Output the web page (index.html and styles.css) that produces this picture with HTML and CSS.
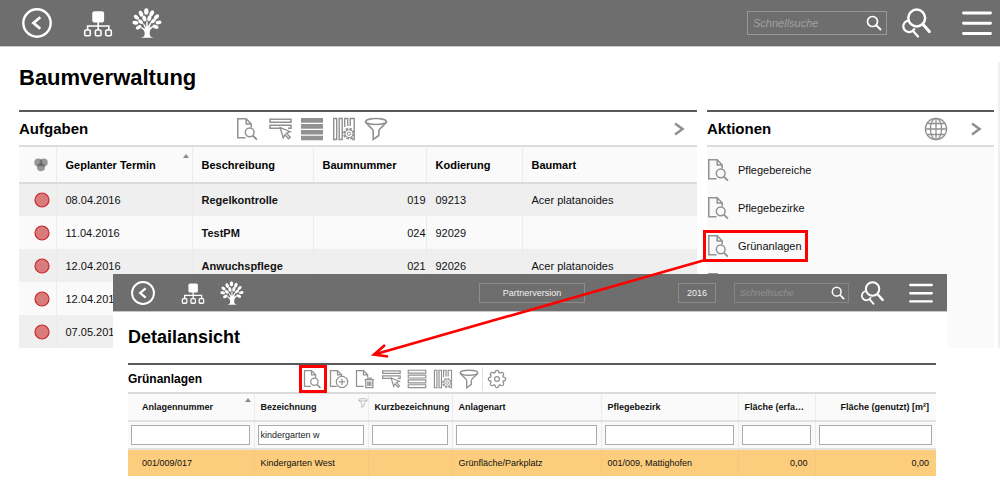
FILE: index.html
```html
<!DOCTYPE html>
<html lang="de">
<head>
<meta charset="utf-8">
<title>Baumverwaltung</title>
<link rel="stylesheet" href="styles.css">
</head>
<body>
<svg class="sprite" aria-hidden="true">
  <symbol id="back" viewBox="0 0 30 30"><circle cx="15" cy="15" r="13.7" fill="none" stroke="currentColor" stroke-width="2.4"/><path d="M18.300 9.200 11.500 15l6.800 5.800" fill="none" stroke="currentColor" stroke-width="2.800"/></symbol>
  <symbol id="sitemap" viewBox="0 0 30 30"><rect x="9.3" y="3.2" width="11.8" height="11.2" rx="2" fill="currentColor"/><g fill="none" stroke="currentColor" stroke-width="1.6"><path d="M15.200 13v9M4.600 22v-4h21.200v4"/><rect x="1.700" y="22" width="5.600" height="5.800" rx="1.3"/><rect x="12.400" y="22" width="5.600" height="5.800" rx="1.3"/><rect x="22.700" y="22" width="5.600" height="5.800" rx="1.3"/></g></symbol>
  <symbol id="tree" viewBox="0 0 30 30"><g fill="currentColor"><path d="M8.500 29.800c3-.8 4.200-1.500 4.200-4 0-2.700-1-4-4-5.800l.6-1 4 1.900-2.400-5.200 1-.5 2.200 4 .2-6h1.300l.2 5.400 2.800-4.600 1 .6-2.200 5.200 4.200-2.300.6 1c-3.300 2.100-4.500 3.700-4.500 7.300 0 2.500 1.300 3.200 4.100 4z"/><ellipse cx="14.300" cy="3.500" rx="2.200" ry="3.300"/><ellipse cx="9" cy="5.700" rx="2" ry="3.100" transform="rotate(-22 9 5.700)"/><ellipse cx="19.800" cy="5.300" rx="2" ry="3.200" transform="rotate(24 19.800 5.300)"/><ellipse cx="12.300" cy="10.500" rx="1.900" ry="3" transform="rotate(-18 12.300 10.500)"/><ellipse cx="17.300" cy="10.200" rx="1.900" ry="3" transform="rotate(18 17.300 10.200)"/><ellipse cx="4.400" cy="9.300" rx="1.900" ry="3" transform="rotate(-52 4.400 9.300)"/><ellipse cx="24.500" cy="8.800" rx="1.900" ry="3" transform="rotate(45 24.500 8.800)"/><ellipse cx="3.400" cy="14.800" rx="1.900" ry="3" transform="rotate(-80 3.400 14.800)"/><ellipse cx="8.600" cy="13.600" rx="1.700" ry="2.900" transform="rotate(-50 8.600 13.600)"/><ellipse cx="21.300" cy="12.900" rx="1.800" ry="2.900" transform="rotate(52 21.300 12.900)"/><ellipse cx="26.500" cy="14.500" rx="1.800" ry="3" transform="rotate(80 26.500 14.500)"/><ellipse cx="6.600" cy="19.300" rx="1.800" ry="3.100" transform="rotate(62 6.600 19.300)"/><ellipse cx="23.500" cy="18.800" rx="1.900" ry="3.100" transform="rotate(-68 23.500 18.800)"/></g></symbol>
  <symbol id="search" viewBox="0 0 16 16"><circle cx="6.500" cy="6.500" r="5" fill="none" stroke="currentColor" stroke-width="1.700"/><path d="M10.200 10.200 15 15" stroke="currentColor" stroke-width="2"/></symbol>
  <symbol id="search2" viewBox="0 0 30 30"><g fill="none" stroke="currentColor" stroke-linecap="round"><circle cx="15.700" cy="10" r="8.400" stroke-width="2.500"/><path d="m22.300 16.800 6 6.800" stroke-width="3"/><path d="M6.200 12.800a5.800 5.800 0 1 0 7 8.300M12.300 23.200l4.700 5.300" stroke-width="2.200"/></g></symbol>
  <symbol id="menu" viewBox="0 0 30 30"><path d="M1.500 5h27M1.500 15.300h27M1.500 25.500h27" stroke="currentColor" stroke-width="2.900" stroke-linecap="round"/></symbol>
  <symbol id="doc" viewBox="0 0 24 24"><g fill="none" stroke="currentColor" stroke-width="1.500"><path d="M9.500 20.800H1.800V1.800h8.400l5 5.200v3.500M10.200 1.800V7h5"/><circle cx="13.700" cy="15.300" r="4.400"/><path d="m16.900 18.600 4 4.100" stroke-width="1.900"/></g></symbol>
  <symbol id="docadd" viewBox="0 0 24 24"><g fill="none" stroke="currentColor" stroke-width="1.500"><path d="M9.500 20.800H1.800V1.800h8.400l5 5.200v1.500M10.200 1.800V7h5"/><circle cx="15.600" cy="15.500" r="6.800"/><path d="M15.600 11.700v7.600M11.800 15.500h7.600"/></g></symbol>
  <symbol id="doctrash" viewBox="0 0 24 24"><g fill="none" stroke="currentColor" stroke-width="1.500"><path d="M10.500 20.800H1.800V1.800h8.400l5 5.200v2.500M10.200 1.800V7h5"/><path d="M11.500 12.800h11.300M15 12.500v-1.700h4.300v1.700M12.900 13v9.300h8.500V13M15.400 15v5.500M17.200 15v5.500M19 15v5.500"/></g></symbol>
  <symbol id="select" viewBox="0 0 24 24"><path d="M2 2.200h21v3.100H2zM13 11.300H2V8.200h21v3.100h-3" fill="none" stroke="currentColor" stroke-width="1.500"/><path d="m12.200 10.700 10 4-3.700 1.500 3.700 4-1.700 1.500-3.600-4-1.700 3.200z" fill="#fff" stroke="currentColor" stroke-width="1.400"/></symbol>
  <symbol id="rows" viewBox="0 0 24 24"><path d="M1 1h22v4.700H1zM1 7h22v4.700H1zM1 13h22v4.500H1zM1 18.800h22v4.400H1z" fill="currentColor"/></symbol>
  <symbol id="rowsline" viewBox="0 0 24 24"><path d="M1.500 1.500h21v3.500h-21zM1.500 7.300h21v3.500h-21zM1.500 13.100h21v3.500h-21zM1.500 18.900h21v3.500h-21z" fill="none" stroke="currentColor" stroke-width="1.400"/></symbol>
  <symbol id="cols" viewBox="0 0 24 24"><g fill="none" stroke="currentColor" stroke-width="1.400"><path d="M1.700 1.500h3v21h-3zM7.200 1.500h3v21h-3zM12.700 10V1.500h3V9M18.200 9V1.500h4V22.500H20"/></g><circle cx="17" cy="16.700" r="5" fill="#fff" stroke="currentColor" stroke-width="1.900" stroke-dasharray="2.500 1.400"/><circle cx="17" cy="16.700" r="4" fill="#fff" stroke="currentColor"/><circle cx="17" cy="16.700" r="1.700" fill="none" stroke="currentColor"/></symbol>
  <symbol id="funnel" viewBox="0 0 24 24"><g fill="none" stroke="currentColor" stroke-width="1.600"><ellipse cx="12" cy="4.500" rx="10.500" ry="3"/><path d="M1.500 4.500c0 2.300 7.700 7 7.700 9.500v8.500l5.600-4V14c0-2.500 7.700-7.200 7.700-9.500"/></g></symbol>
  <symbol id="gear" viewBox="0 0 24 24"><g fill="none" stroke="currentColor" stroke-width="1.500"><path d="M9.700 4.400c0-3.700 4.600-3.700 4.600 0l1.500.6c2.600-2.600 5.900.7 3.200 3.300l.6 1.400c3.700 0 3.700 4.600 0 4.600l-.6 1.500c2.700 2.600-.6 5.900-3.200 3.200l-1.500.6c0 3.700-4.600 3.700-4.600 0L8.300 19c-2.600 2.700-5.900-.6-3.300-3.200l-.6-1.500c-3.700 0-3.700-4.600 0-4.600L5 8.300C2.400 5.700 5.700 2.400 8.300 5z"/><circle cx="12" cy="12" r="2.900"/></g></symbol>
  <symbol id="globe" viewBox="0 0 24 24"><g fill="none" stroke="currentColor" stroke-width="1.300"><circle cx="12" cy="12" r="10.600"/><ellipse cx="12" cy="12" rx="5.600" ry="10.600"/><path d="M12 1.400v21.200M1.400 12h21.200M3 6.500h18M3 17.500h18"/></g></symbol>
  <symbol id="next" viewBox="0 0 12 16"><path d="m2 2.500 7.500 5.500L2 13.500" fill="none" stroke="currentColor" stroke-width="2.600"/></symbol>
  <symbol id="status" viewBox="0 0 14 14"><g fill="#555" fill-opacity=".6"><circle cx="4.300" cy="4.500" r="4"/><circle cx="9.700" cy="4.500" r="4"/><circle cx="7" cy="9.300" r="4"/></g></symbol>
  <symbol id="dot" viewBox="0 0 16 16"><circle cx="8" cy="8" r="7" fill="#da7b7b" stroke="#c4282b" stroke-width="1.200"/></symbol>
</svg>

<header class="bar">
  <button class="icon-btn" aria-label="Zurück"><svg class="i30"><use href="#back"/></svg></button>
  <button class="icon-btn home" aria-label="Übersicht"><svg class="i30"><use href="#sitemap"/></svg></button>
  <button class="icon-btn tree" aria-label="Bäume"><svg class="i30"><use href="#tree"/></svg></button>
  <div class="bar-end">
    <label class="search"><input type="text" placeholder="Schnellsuche" aria-label="Schnellsuche"><svg class="i16"><use href="#search"/></svg></label>
    <button class="icon-btn finder" aria-label="Erweiterte Suche"><svg class="i30"><use href="#search2"/></svg></button>
    <button class="icon-btn menu" aria-label="Menü"><svg class="i30"><use href="#menu"/></svg></button>
  </div>
</header>

<main class="page">
  <h1>Baumverwaltung</h1>
  <div class="panels">
    <section class="panel">
      <div class="panel-head">
        <h2>Aufgaben</h2>
        <div class="tools">
          <button class="icon-btn" aria-label="Anzeigen"><svg><use href="#doc"/></svg></button>
          <button class="icon-btn" aria-label="Auswählen"><svg><use href="#select"/></svg></button>
          <button class="icon-btn" aria-label="Zeilen"><svg><use href="#rows"/></svg></button>
          <button class="icon-btn" aria-label="Spalten"><svg><use href="#cols"/></svg></button>
          <button class="icon-btn" aria-label="Filter"><svg><use href="#funnel"/></svg></button>
        </div>
        <button class="icon-btn next" aria-label="Weiter"><svg><use href="#next"/></svg></button>
      </div>
      <table class="tasks">
        <colgroup><col class="c-status"><col class="c-date"><col class="c-desc"><col class="c-num"><col class="c-code"><col></colgroup>
        <thead><tr><th><svg class="i14"><use href="#status"/></svg></th><th class="sorted">Geplanter Termin</th><th>Beschreibung</th><th>Baumnummer</th><th>Kodierung</th><th>Baumart</th></tr></thead>
        <tbody>
          <tr><td><svg class="i16"><use href="#dot"/></svg></td><td>08.04.2016</td><td class="strong">Regelkontrolle</td><td class="num">019</td><td>09213</td><td>Acer platanoides</td></tr>
          <tr><td><svg class="i16"><use href="#dot"/></svg></td><td>11.04.2016</td><td class="strong">TestPM</td><td class="num">024</td><td>92029</td><td></td></tr>
          <tr><td><svg class="i16"><use href="#dot"/></svg></td><td>12.04.2016</td><td class="strong">Anwuchspflege</td><td class="num">021</td><td>92026</td><td>Acer platanoides</td></tr>
          <tr><td><svg class="i16"><use href="#dot"/></svg></td><td>12.04.2016</td><td></td><td></td><td></td><td></td></tr>
          <tr><td><svg class="i16"><use href="#dot"/></svg></td><td>07.05.2016</td><td></td><td></td><td></td><td></td></tr>
        </tbody>
      </table>
    </section>
    <section class="panel actions">
      <div class="panel-head">
        <h2>Aktionen</h2>
        <button class="icon-btn globe" aria-label="Karte"><svg><use href="#globe"/></svg></button>
        <button class="icon-btn next" aria-label="Weiter"><svg><use href="#next"/></svg></button>
      </div>
      <ul>
        <li><a href="#"><svg><use href="#doc"/></svg>Pflegebereiche</a></li>
        <li><a href="#"><svg><use href="#doc"/></svg>Pflegebezirke</a></li>
        <li><a href="#" class="marked"><svg><use href="#doc"/></svg>Grünanlagen</a></li>
        <li><svg><use href="#doc"/></svg></li>
      </ul>
    </section>
  </div>
</main>

<section class="detail">
  <header class="bar small">
    <button class="icon-btn" aria-label="Zurück"><svg class="i24"><use href="#back"/></svg></button>
    <button class="icon-btn home" aria-label="Übersicht"><svg class="i24"><use href="#sitemap"/></svg></button>
    <button class="icon-btn tree" aria-label="Bäume"><svg class="i24"><use href="#tree"/></svg></button>
    <div class="bar-end">
      <button class="box version">Partnerversion</button>
      <button class="box year">2016</button>
      <label class="search"><input type="text" placeholder="Schnellsuche" aria-label="Schnellsuche"><svg class="i14"><use href="#search"/></svg></label>
      <button class="icon-btn finder" aria-label="Erweiterte Suche"><svg class="i24"><use href="#search2"/></svg></button>
      <button class="icon-btn menu" aria-label="Menü"><svg class="i24"><use href="#menu"/></svg></button>
    </div>
  </header>
  <div class="detail-body">
    <h1>Detailansicht</h1>
    <div class="panel-head">
      <h2>Grünanlagen</h2>
      <div class="tools">
        <button class="icon-btn marked" aria-label="Anzeigen"><svg><use href="#doc"/></svg></button>
        <button class="icon-btn" aria-label="Neu"><svg><use href="#docadd"/></svg></button>
        <button class="icon-btn" aria-label="Löschen"><svg><use href="#doctrash"/></svg></button>
        <button class="icon-btn" aria-label="Auswählen"><svg><use href="#select"/></svg></button>
        <button class="icon-btn" aria-label="Zeilen"><svg><use href="#rowsline"/></svg></button>
        <button class="icon-btn" aria-label="Spalten"><svg><use href="#cols"/></svg></button>
        <button class="icon-btn" aria-label="Filter"><svg><use href="#funnel"/></svg></button>
        <button class="icon-btn settings" aria-label="Einstellungen"><svg><use href="#gear"/></svg></button>
      </div>
    </div>
    <table class="areas">
      <colgroup><col class="a-num"><col class="a-name"><col class="a-short"><col><col class="a-district"><col class="a-area"><col class="a-used"></colgroup>
      <thead>
        <tr><th class="sorted">Anlagennummer</th><th class="filtered">Bezeichnung<svg class="i10"><use href="#funnel"/></svg></th><th>Kurzbezeichnung</th><th>Anlagenart</th><th>Pflegebezirk</th><th>Fläche (erfa…</th><th class="num">Fläche (genutzt) [m²]</th></tr>
        <tr class="filters"><td><input type="text" aria-label="Anlagennummer"></td><td><input type="text" aria-label="Bezeichnung" value="kindergarten w"></td><td><input type="text" aria-label="Kurzbezeichnung"></td><td><input type="text" aria-label="Anlagenart"></td><td><input type="text" aria-label="Pflegebezirk"></td><td><input type="text" aria-label="Fläche (erfasst)"></td><td><input type="text" aria-label="Fläche (genutzt)"></td></tr>
      </thead>
      <tbody><tr><td>001/009/017</td><td>Kindergarten West</td><td></td><td>Grünfläche/Parkplatz</td><td>001/009, Mattighofen</td><td class="num">0,00</td><td class="num">0,00</td></tr></tbody>
    </table>
  </div>
</section>

<svg class="arrow" viewBox="0 0 340 105" aria-hidden="true"><path d="M335 2 6 96M15 87 4 96.500 18 98.500" fill="none" stroke="#f00" stroke-width="2.700"/></svg>
</body>
</html>
```
FILE: styles.css
```css
* { box-sizing: border-box; }

body {
  margin: 0;
  position: relative;
  min-height: 100vh;
  overflow: hidden;
  background: #fff;
  color: #111;
  font-family: "Liberation Sans", Arial, sans-serif;
  font-size: 11px;
}

h1, h2 { margin: 0; color: #000; }
ul { list-style: none; margin: 0; padding: 0; }
a { color: inherit; text-decoration: none; }
svg { display: block; }
.sprite { position: absolute; width: 0; height: 0; }

.i30 { width: 30px; height: 30px; }
.i24 { width: 24px; height: 24px; }
.i16 { width: 16px; height: 16px; }
.i14 { width: 14px; height: 14px; }
.i10 { width: 10px; height: 10px; }

.icon-btn {
  padding: 0;
  border: 0;
  background: none;
  color: inherit;
  flex: none;
}

/* Top bars */
.bar {
  display: flex;
  align-items: center;
  height: 47px;
  padding: 0 8px 0 22px;
  background: #6e6e6e;
  border-bottom: 1px solid #c8c8c8;
  color: #fff;
}
.bar .home { margin-left: 31px; }
.bar .tree { margin-left: 19px; }
.bar-end { display: flex; align-items: center; margin-left: auto; }
.bar .finder { margin-left: 14px; }
.bar .menu { margin-left: 31px; }

.search {
  display: flex;
  align-items: center;
  width: 140px;
  height: 24px;
  padding: 0 4px 0 5px;
  border: 1px solid #989898;
}
.search input {
  flex: 1;
  min-width: 0;
  padding: 0;
  border: 0;
  outline: 0;
  background: none;
  color: #fff;
  font: italic 11px "Liberation Sans", Arial, sans-serif;
}
.search input::placeholder { color: #a0a0a0; opacity: 1; }

/* Main page */
.page {
  padding: 16px 6px 0 19px;
  background: linear-gradient(#efefef, #efefef) right 0 top 15px / 2px 100% no-repeat;
}
.page h1 { font-size: 22px; line-height: 30px; }
.panels {
  display: grid;
  grid-template-columns: minmax(0, 678fr) minmax(0, 287fr);
  gap: 10px;
  margin-top: 17px;
}
.panel-head {
  display: flex;
  align-items: center;
  height: 37px;
  border-top: 2px solid #5a5a5a;
  border-bottom: 2px solid #dcdcdc;
  color: #919191;
}
.panel-head h2 { font-size: 15px; }
.panel > .panel-head > h2 { width: 217px; }
.tools { display: flex; align-items: center; gap: 8px; }
.tools svg, .globe svg { width: 24px; height: 24px; }
.next { margin-left: auto; margin-right: 12px; }
.next svg { width: 12px; height: 16px; }

table {
  width: 100%;
  table-layout: fixed;
  border-collapse: collapse;
  background: #fafafa;
}
th, td {
  padding: 0 9px;
  text-align: left;
  white-space: nowrap;
  border-right: 1px solid #ececec;
}
th:last-child, td:last-child { border-right: 0; }
.sorted, .filtered { position: relative; }
.sorted::after {
  content: "";
  position: absolute;
  right: 3px;
  top: 7px;
  border: 3px solid transparent;
  border-top: 0;
  border-bottom: 4px solid #8c8c8c;
}

.tasks thead tr { height: 36px; border-bottom: 2px solid #dcdcdc; }
.tasks tbody tr { height: 33px; }
.tasks tbody tr:nth-child(odd) { background: #efefef; }
.tasks tr > :first-child { padding: 0 0 0 15px; }
.tasks th { color: #000; }
.tasks .strong { font-weight: bold; }
.tasks .num { padding-right: 0; text-align: right; }
.c-status { width: 37px; }
.c-date { width: 136px; }
.c-desc { width: 121px; }
.c-num { width: 113px; }
.c-code { width: 96px; }

.actions { background: #fafafa; }
.actions .panel-head { background: #fff; }
.actions > .panel-head > h2 { width: auto; }
.actions .globe { margin-left: auto; }
.actions .globe + .next { margin-left: 22px; }
.actions ul { padding-top: 4px; color: #919191; }
.actions li { display: flex; align-items: center; height: 38px; }
.actions li svg { width: 24px; height: 24px; flex: none; color: #919191; }
.actions a { display: flex; align-items: center; gap: 7px; padding-right: 2px; color: #111; }

.marked { position: relative; }
.marked::after {
  content: "";
  position: absolute;
  inset: -4px;
  border: 3px solid #f00;
}

/* Detail window */
.detail {
  position: absolute;
  top: 274px;
  left: 113px;
  right: 53px;
  bottom: 0;
  background: #fff;
  font-size: 9px;
}
.small { height: 38px; padding: 0 14px 0 18px; }
.small .home { margin-left: 26px; }
.small .tree { margin-left: 15px; }
.small .finder { margin-left: 11px; }
.small .menu { margin-left: 25px; }
.small .search { width: 115px; height: 20px; margin-left: 18px; padding: 0 3px 0 5px; border-color: #858585; }
.small .search input { font-size: 9px; }
.small .search input::placeholder { color: #929292; }
.box {
  height: 20px;
  padding: 0;
  border: 1px solid #8c8c8c;
  background: none;
  color: #f0f0f0;
  font: 9px "Liberation Sans", Arial, sans-serif;
}
.version { width: 106px; }
.year { width: 38px; margin-left: 93px; }

.detail-body { padding: 13px 11px 0 15px; }
.detail-body h1 { font-size: 18px; line-height: 24px; }
.detail-body .panel-head { height: 31px; margin-top: 14px; }
.detail-body h2 { width: 175px; font-size: 12px; }
.detail-body .tools { gap: 6px; }
.detail-body .tools svg { width: 20px; height: 20px; }
.settings { position: relative; margin-left: 2px; }
.settings::before {
  content: "";
  position: absolute;
  left: -5px;
  top: -2px;
  height: 24px;
  border-left: 1px solid #e0e0e0;
}

.areas th, .areas td { padding: 0 6px; }
.areas .sorted::after { top: 4px; }
.areas tr > :first-child { padding-left: 14px; }
.areas thead tr { height: 28px; border-bottom: 2px solid #e2e2e2; }
.areas thead tr:first-child { height: 27px; }
.areas tbody tr { height: 27px; background: #fbcd7d; }
.areas tbody td { border-color: #f4c87c; }
.areas .num { padding-right: 7px; text-align: right; }
.areas .filters > td { padding: 0 4px 0 3px; }
.filters input {
  display: block;
  width: 100%;
  height: 20px;
  padding: 0 2px;
  border: 1px solid #ababab;
  background: #fff;
  color: #222;
  font: 9px "Liberation Sans", Arial, sans-serif;
}
.filtered svg { position: absolute; right: 0; top: 4px; color: #a0a0a0; }
.a-num { width: 126px; }
.a-name { width: 114px; }
.a-short { width: 84px; }
.a-district { width: 137px; }
.a-area { width: 77px; }
.a-used { width: 121px; }

.arrow {
  position: absolute;
  left: 370px;
  top: 258px;
  width: 340px;
  height: 105px;
}
```
